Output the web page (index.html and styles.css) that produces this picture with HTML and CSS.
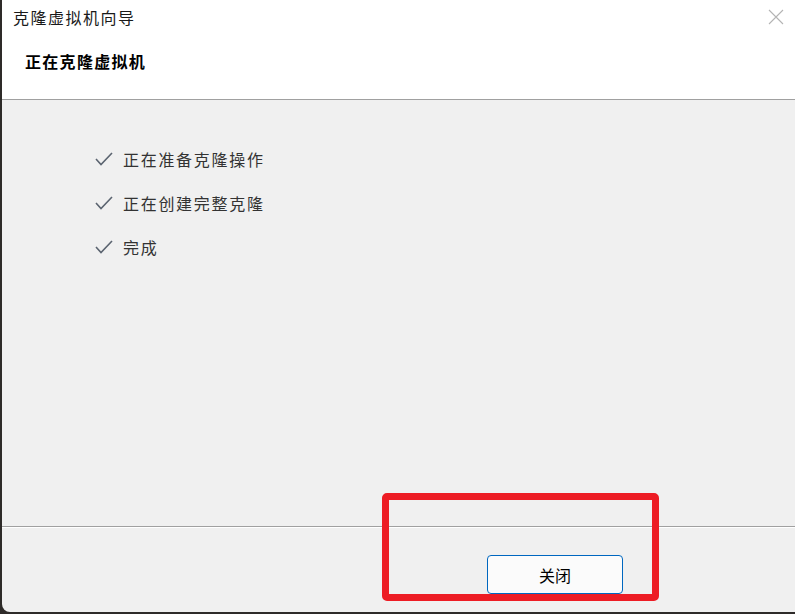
FILE: index.html
```html
<!DOCTYPE html>
<html lang="zh">
<head>
<meta charset="utf-8">
<title>克隆虚拟机向导</title>
<link rel="stylesheet" href="styles.css">
</head>
<body>
<div class="window">
  <div class="header">
    <div class="titlebar">
      <span class="title">克隆虚拟机向导</span>
      <svg class="close" width="16" height="16" viewBox="0 0 16 16"><path d="M1 1 L15 15 M15 1 L1 15" stroke="#b4b4b4" stroke-width="1.1" fill="none"/></svg>
    </div>
    <div class="heading">正在克隆虚拟机</div>
  </div>
  <div class="content">
    <ul class="steps">
      <li class="step"><svg class="check" width="18" height="14" viewBox="0 0 18 14"><path d="M1 7 L6 12.5 L17 1" stroke="#5b6470" stroke-width="1.6" fill="none"/></svg><span>正在准备克隆操作</span></li>
      <li class="step"><svg class="check" width="18" height="14" viewBox="0 0 18 14"><path d="M1 7 L6 12.5 L17 1" stroke="#5b6470" stroke-width="1.6" fill="none"/></svg><span>正在创建完整克隆</span></li>
      <li class="step"><svg class="check" width="18" height="14" viewBox="0 0 18 14"><path d="M1 7 L6 12.5 L17 1" stroke="#5b6470" stroke-width="1.6" fill="none"/></svg><span>完成</span></li>
    </ul>
  </div>
  <div class="footer">
    <button class="btn">关闭</button>
  </div>
  <div class="highlight"></div>
</div>
</body>
</html>
```
FILE: styles.css
```css
* { box-sizing: border-box; }
html, body {
  margin: 0;
  padding: 0;
  width: 795px;
  height: 614px;
  overflow: hidden;
  background: #2e2b29;
  font-family: "Noto Sans CJK SC", "Noto Sans", sans-serif;
}
.window {
  position: relative;
  margin-left: 2px;
  width: 793px;
  height: 612px;
  background: #f0f0f0;
  border-bottom-left-radius: 8px;
  display: flex;
  flex-direction: column;
  overflow: hidden;
}
.header {
  height: 100px;
  background: #ffffff;
  border-bottom: 1px solid #a0a0a0;
  display: flex;
  flex-direction: column;
}
.titlebar {
  display: flex;
  justify-content: space-between;
  align-items: flex-start;
  padding: 6px 11px 0 11px;
  height: 40px;
}
.title {
  font-size: 16px;
  line-height: 22px;
  color: #1a1a1a;
  letter-spacing: 1.5px;
}
.close {
  margin-top: 3px;
}
.heading {
  padding-left: 23px;
  margin-top: 10px;
  font-size: 16px;
  line-height: 22px;
  font-weight: bold;
  color: #000;
  letter-spacing: 1.3px;
}
.content {
  height: 427px;
  border-bottom: 1px solid #a0a0a0;
  padding-top: 37px;
}
.steps {
  list-style: none;
  margin: 0;
  padding: 0 0 0 93px;
}
.step {
  height: 44px;
  display: flex;
  align-items: center;
  gap: 10px;
  font-size: 16px;
  color: #333;
  letter-spacing: 1.7px;
}
.check { flex: none; }
.footer {
  flex: 1;
  border-top: 1px solid #ffffff;
  padding: 27px 0 0 485px;
}
.btn {
  width: 136px;
  height: 39px;
  background: #fbfbfb;
  border: 1px solid #0067c0;
  border-radius: 4px;
  font-family: "Noto Sans CJK SC", sans-serif;
  font-size: 16px;
  color: #000;
  padding: 0;
}
.highlight {
  position: absolute;
  left: 380px;
  top: 493px;
  width: 277px;
  height: 108px;
  border: 7px solid #ed1c24;
  border-radius: 5px;
}
```
